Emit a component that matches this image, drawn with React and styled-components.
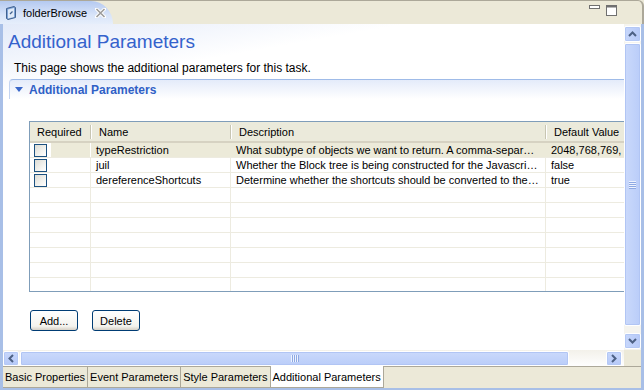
import React from 'react';
import styled, { createGlobalStyle } from 'styled-components';

const GlobalStyle = createGlobalStyle`
  html, body {
    margin: 0;
    padding: 0;
    overflow: hidden;
    background: #ece9d8;
  }
  * { box-sizing: border-box; }
`;

const ui = `'Liberation Sans', Arial, sans-serif`;

const rows = [
  { name: 'typeRestriction', desc: 'What subtype of objects we want to return. A comma-separ…', value: '2048,768,769,', selected: true },
  { name: 'juil', desc: 'Whether the Block tree is being constructed for the Javascri…', value: 'false' },
  { name: 'dereferenceShortcuts', desc: 'Determine whether the shortcuts should be converted to the…', value: 'true' },
  {}, {}, {}, {}, {}, {}, {},
];

const cols = [61, 140, 315, 110];

const App = () => {
  return (
    <>
      <GlobalStyle />
      <Window>
        <TopStrip>
          <EditorTab>
            <svg width="12" height="14" viewBox="0 0 12 14">
              <path d="M1.5 2.5 L9 0.5 L10.5 1.5 L10.5 11.5 L3 13.5 L1.5 12.5 Z" fill="#7fa3d6" stroke="#40618f" />
              <path d="M3 3.5 L9 2 L9 11 L3 12.5 Z" fill="#dfe9f7" />
              <path d="M5 8 L7.5 5.5" stroke="#40618f" strokeWidth="1.2" />
            </svg>
            <TabLabel>folderBrowse</TabLabel>
            <svg width="11" height="10" viewBox="0 0 11 10">
              <path d="M1.5 1 L9.5 9 M9.5 1 L1.5 9" stroke="#fff" strokeWidth="3.4" strokeLinecap="square" />
              <path d="M1.5 1 L9.5 9 M9.5 1 L1.5 9" stroke="#9c9c9c" strokeWidth="1.6" />
            </svg>
          </EditorTab>
          <Controls>
            <svg width="11" height="5" viewBox="0 0 11 5">
              <rect x="0.5" y="0.5" width="10" height="3" fill="#fff" stroke="#707070" />
            </svg>
            <svg width="11" height="11" viewBox="0 0 11 11">
              <rect x="0.5" y="0.5" width="10" height="10" fill="#fff" stroke="#707070" />
              <rect x="0.5" y="0.5" width="10" height="2" fill="#707070" />
            </svg>
          </Controls>
        </TopStrip>

        <Frame>
          <Main>
            <Content>
              <Heading>Additional Parameters</Heading>
              <Description>This page shows the additional parameters for this task.</Description>
              <Section>
                <SectionHeader>
                  <svg width="8" height="5" viewBox="0 0 8 5">
                    <path d="M0 0 L8 0 L4 5 Z" fill="#3a67c9" />
                  </svg>
                  <span>Additional Parameters</span>
                </SectionHeader>
                <SectionBody>
                  <Table>
                    <HeaderRow>
                      {['Required', 'Name', 'Description', 'Default Value'].map((h, i) => (
                        <HeadCell key={h} $w={cols[i]} $first={i === 0}>{h}</HeadCell>
                      ))}
                    </HeaderRow>
                    {rows.map((r, i) => (
                      <Row key={i} $selected={r.selected}>
                        <Cell $w={cols[0]} $first $selected={r.selected}>
                          {r.name && <Check />}
                        </Cell>
                        <Cell $w={cols[1]} $selected={r.selected}>{r.name}</Cell>
                        <Cell $w={cols[2]} $selected={r.selected}>{r.desc}</Cell>
                        <Cell $w={cols[3]} $selected={r.selected}>{r.value}</Cell>
                      </Row>
                    ))}
                  </Table>
                  <Buttons>
                    <Button>Add...</Button>
                    <Button>Delete</Button>
                  </Buttons>
                </SectionBody>
              </Section>
            </Content>
            <VScroll>
              <ArrowButton>
                <svg width="9" height="6" viewBox="0 0 9 6">
                  <path d="M1 5 L4.5 1.5 L8 5" fill="none" stroke="#4d6185" strokeWidth="2" />
                </svg>
              </ArrowButton>
              <VThumb>
                <Grip $vertical />
              </VThumb>
              <ArrowButton>
                <svg width="9" height="6" viewBox="0 0 9 6">
                  <path d="M1 1 L4.5 4.5 L8 1" fill="none" stroke="#4d6185" strokeWidth="2" />
                </svg>
              </ArrowButton>
            </VScroll>
          </Main>
          <HScrollRow>
            <HScroll>
              <ArrowButton $h>
                <svg width="6" height="9" viewBox="0 0 6 9">
                  <path d="M5 1 L1.5 4.5 L5 8" fill="none" stroke="#4d6185" strokeWidth="2" />
                </svg>
              </ArrowButton>
              <HThumb>
                <Grip />
              </HThumb>
              <HTrack />
              <ArrowButton $h>
                <svg width="6" height="9" viewBox="0 0 6 9">
                  <path d="M1 1 L4.5 4.5 L1 8" fill="none" stroke="#4d6185" strokeWidth="2" />
                </svg>
              </ArrowButton>
            </HScroll>
            <Corner />
          </HScrollRow>
          <BottomTabs>
            <PageTab>Basic Properties</PageTab>
            <PageTab>Event Parameters</PageTab>
            <PageTab>Style Parameters</PageTab>
            <PageTab $active>Additional Parameters</PageTab>
          </BottomTabs>
        </Frame>
      </Window>
    </>
  );
};

const Window = styled.div`
  width: 644px;
  height: 390px;
  display: flex;
  flex-direction: column;
  background: #ece9d8;
  font-family: ${ui};
  font-size: 11px;
  color: #000;
`;

const TopStrip = styled.div`
  height: 24px;
  display: flex;
  align-items: flex-end;
  justify-content: space-between;
  border-top: 1px solid #aca899;
  border-right: 2px solid #aca899;
  border-top-right-radius: 6px;
`;

const EditorTab = styled.div`
  width: 113px;
  height: 23px;
  display: flex;
  align-items: center;
  gap: 6px;
  padding: 0 0 0 5px;
  background: linear-gradient(to bottom, #b4c9f0, #d8e4f9 60%, #e6eefb);
  border-top-right-radius: 22px 23px;
`;

const TabLabel = styled.span`
  font-size: 11px;
  margin-right: 2px;
`;

const Controls = styled.div`
  display: flex;
  align-items: flex-start;
  gap: 6px;
  align-self: flex-start;
  padding: 4px 25px 0 0;
`;

const Frame = styled.div`
  flex: 1;
  display: flex;
  flex-direction: column;
  border-left: 3px solid #a8bfe7;
  border-right: 3px solid #a8bfe7;
  border-bottom: 2px solid #a8bfe7;
  min-height: 0;
`;

const Main = styled.div`
  flex: 1;
  display: flex;
  min-height: 0;
  background: #fff;
`;

const Content = styled.div`
  flex: 1;
  overflow: hidden;
  background: linear-gradient(170deg, #e3eaf9 0px, #ffffff 70px);
`;

const Heading = styled.div`
  height: 36px;
  padding-left: 5px;
  display: flex;
  align-items: center;
  font-size: 19px;
  color: #3462cc;
`;

const Description = styled.div`
  height: 16px;
  padding-left: 11px;
  line-height: 16px;
  font-size: 12px;
`;

const Section = styled.div`
  margin: 3px 0 0 6px;
`;

const SectionHeader = styled.div`
  height: 20px;
  display: flex;
  align-items: center;
  gap: 6px;
  padding-left: 5px;
  border-top: 1px solid #9fbbe8;
  border-left: 1px solid #c3d4f1;
  border-top-left-radius: 4px;
  background: linear-gradient(to bottom, #e4ebfa, #ffffff);
  color: #2f5fc6;
  font-weight: bold;
  font-size: 12px;
`;

const SectionBody = styled.div`
  padding: 22px 0 0 20px;
  background: #fff;
`;

const Table = styled.div`
  width: 640px;
  border: 1px solid #7f9db9;
  border-right: none;
  height: 171px;
  overflow: hidden;
  background: #fff;
`;

const HeaderRow = styled.div`
  display: flex;
  height: 21px;
  padding-top: 1px;
  background: #ebeadb;
  border-bottom: 2px solid #d6d2c2;
`;

const HeadCell = styled.div`
  width: ${p => p.$w}px;
  flex: none;
  display: flex;
  align-items: center;
  padding-left: ${p => (p.$first ? 7 : 8)}px;
  position: relative;

  &::after {
    content: '';
    position: absolute;
    right: 0;
    top: 2px;
    bottom: 2px;
    width: 1px;
    background: #c7c5b2;
    box-shadow: 1px 0 0 #fff;
  }
`;

const Row = styled.div`
  display: flex;
  height: 15px;
  border-bottom: 1px solid #edebe0;
  background: ${p => (p.$selected ? '#ecead9' : '#fff')};
`;

const Cell = styled.div`
  width: ${p => p.$w}px;
  flex: none;
  display: flex;
  align-items: center;
  padding-left: ${p => (p.$first ? 4 : 5)}px;
  border-right: 1px solid ${p => (p.$selected ? 'transparent' : '#edebe0')};
  white-space: nowrap;
  overflow: hidden;
  background: ${p => (p.$first && p.$selected ? 'linear-gradient(to right, #fff 21px, transparent 21px)' : 'none')};
`;

const Check = styled.span`
  width: 13px;
  height: 13px;
  border: 1px solid #1c5180;
  background: linear-gradient(135deg, #dcdcd5, #f6f6f3 70%, #fff);
`;

const Buttons = styled.div`
  display: flex;
  gap: 14px;
  padding: 18px 0 0 1px;
`;

const Button = styled.button`
  width: 48px;
  height: 21px;
  padding: 0;
  font-family: ${ui};
  font-size: 11px;
  color: #000;
  border: 1px solid #003c74;
  border-radius: 3px;
  background: linear-gradient(to bottom, #ffffff, #f4f3ee 80%, #d6d0c5);
`;

const VScroll = styled.div`
  width: 17px;
  display: flex;
  flex-direction: column;
  gap: 1px;
  padding: 2px 0 1px;
  background: #f5f4ef;
`;

const ArrowButton = styled.div`
  width: ${p => (p.$h ? 16 : 17)}px;
  height: ${p => (p.$h ? 15 : 16)}px;
  flex: none;
  display: flex;
  align-items: center;
  justify-content: center;
  border: 1px solid #fff;
  border-radius: 2px;
  background: linear-gradient(${p => (p.$h ? 'to bottom' : 'to right')}, #c7d7fb, #b6c9f8);
  box-shadow: inset 0 0 0 1px #b4c8f5;
`;

const VThumb = styled.div`
  flex: 1;
  display: flex;
  align-items: center;
  justify-content: center;
  margin-bottom: 6px;
  border: 1px solid #fff;
  border-radius: 2px;
  background: linear-gradient(to right, #cad9fb, #bacdf9);
  box-shadow: inset 0 0 0 1px #b1c5f4;
`;

const Grip = styled.div`
  width: ${p => (p.$vertical ? 7 : 8)}px;
  height: ${p => (p.$vertical ? 8 : 7)}px;
  background: ${p =>
    p.$vertical
      ? 'repeating-linear-gradient(to bottom, #eef3fe 0 1px, #8ea9e3 1px 2px)'
      : 'repeating-linear-gradient(to right, #eef3fe 0 1px, #8ea9e3 1px 2px)'};
`;

const HScrollRow = styled.div`
  height: 16px;
  display: flex;
  background: #fff;
`;

const HScroll = styled.div`
  flex: 1;
  display: flex;
  align-items: center;
  gap: 1px;
  padding: 0 2px 0 0;
  background: linear-gradient(to bottom, #f3f1ea, #fefefe);
`;

const HThumb = styled.div`
  width: 549px;
  height: 15px;
  display: flex;
  align-items: center;
  justify-content: center;
  border: 1px solid #fff;
  border-radius: 2px;
  background: linear-gradient(to bottom, #cad9fb, #bacdf9);
  box-shadow: inset 0 0 0 1px #b1c5f4;
`;

const HTrack = styled.div`
  flex: 1;
`;

const Corner = styled.div`
  width: 17px;
  background: #ece9d8;
`;

const BottomTabs = styled.div`
  height: 22px;
  display: flex;
  align-items: stretch;
  border-top: 1px solid #aca899;
  background: #ece9d8;
`;

const PageTab = styled.div`
  display: flex;
  align-items: center;
  padding: 0 2px;
  margin-top: ${p => (p.$active ? -1 : 0)}px;
  border-right: 1px solid #aca899;
  border-bottom: 1px solid #aca899;
  background: ${p => (p.$active ? '#fff' : '#ece9d8')};
  font-size: 11px;
  white-space: nowrap;
`;

export default App;
